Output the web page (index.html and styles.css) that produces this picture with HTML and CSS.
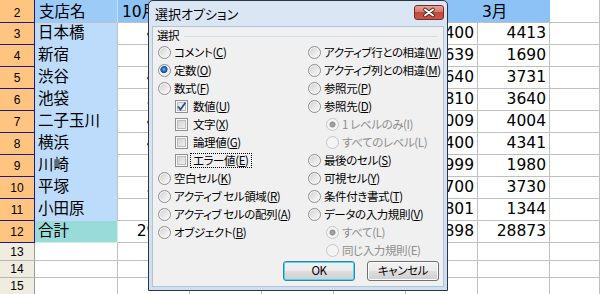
FILE: index.html
```html
<!DOCTYPE html>
<html lang="ja">
<head>
<meta charset="utf-8">
<title>選択オプション</title>
<link rel="stylesheet" href="styles.css">
</head>
<body>
<div class="sheet">
  <div class="row r2">
    <div class="c rh">2</div>
    <div class="c hd hb">支店名</div>
    <div class="c hd">10月</div>
    <div class="c hd">11月</div>
    <div class="c hd">12月</div>
    <div class="c hd">1月</div>
    <div class="c hd">2月</div>
    <div class="c hd">3月</div>
    <div class="c"></div>
  </div>
  <div class="row"><div class="c rh">3</div><div class="c nm">日本橋</div><div class="c n">4120</div><div class="c n"></div><div class="c n"></div><div class="c n"></div><div class="c n">3400</div><div class="c n">4413</div><div class="c"></div></div>
  <div class="row"><div class="c rh">4</div><div class="c nm">新宿</div><div class="c n">1580</div><div class="c n"></div><div class="c n"></div><div class="c n"></div><div class="c n">1639</div><div class="c n">1690</div><div class="c"></div></div>
  <div class="row"><div class="c rh">5</div><div class="c nm">渋谷</div><div class="c n">4210</div><div class="c n"></div><div class="c n"></div><div class="c n"></div><div class="c n">3640</div><div class="c n">3731</div><div class="c"></div></div>
  <div class="row"><div class="c rh">6</div><div class="c nm">池袋</div><div class="c n">3520</div><div class="c n"></div><div class="c n"></div><div class="c n"></div><div class="c n">3810</div><div class="c n">3640</div><div class="c"></div></div>
  <div class="row"><div class="c rh">7</div><div class="c nm">二子玉川</div><div class="c n">4100</div><div class="c n"></div><div class="c n"></div><div class="c n"></div><div class="c n">4009</div><div class="c n">4004</div><div class="c"></div></div>
  <div class="row"><div class="c rh">8</div><div class="c nm">横浜</div><div class="c n">4230</div><div class="c n"></div><div class="c n"></div><div class="c n"></div><div class="c n">3400</div><div class="c n">4341</div><div class="c"></div></div>
  <div class="row"><div class="c rh">9</div><div class="c nm">川崎</div><div class="c n">1870</div><div class="c n"></div><div class="c n"></div><div class="c n"></div><div class="c n">1999</div><div class="c n">1980</div><div class="c"></div></div>
  <div class="row"><div class="c rh">10</div><div class="c nm">平塚</div><div class="c n">3620</div><div class="c n"></div><div class="c n"></div><div class="c n"></div><div class="c n">3700</div><div class="c n">3730</div><div class="c"></div></div>
  <div class="row"><div class="c rh">11</div><div class="c nm">小田原</div><div class="c n">1290</div><div class="c n"></div><div class="c n"></div><div class="c n"></div><div class="c n">1801</div><div class="c n">1344</div><div class="c"></div></div>
  <div class="row"><div class="c rh">12</div><div class="c nm tot">合計</div><div class="c n">29540</div><div class="c n"></div><div class="c n"></div><div class="c n"></div><div class="c n">28898</div><div class="c n">28873</div><div class="c"></div></div>
  <div class="row r13"><div class="c rh off">13</div><div class="c"></div><div class="c"></div><div class="c"></div><div class="c"></div><div class="c"></div><div class="c"></div><div class="c"></div><div class="c"></div></div>
  <div class="row r14"><div class="c rh off">14</div><div class="c"></div><div class="c"></div><div class="c"></div><div class="c"></div><div class="c"></div><div class="c"></div><div class="c"></div><div class="c"></div></div>
  <div class="row r14"><div class="c rh off">15</div><div class="c"></div><div class="c"></div><div class="c"></div><div class="c"></div><div class="c"></div><div class="c"></div><div class="c"></div><div class="c"></div></div>
</div>

<div class="dlg">
  <div class="titlebar">
    <span class="ttl">選択オプション</span>
    <span class="close"><svg width="30" height="15" viewBox="0 0 30 15"><path d="M11 4.5 L19 10.5 M19 4.5 L11 10.5" stroke="#4a2020" stroke-width="3.6" stroke-linecap="round"/><path d="M11 4.5 L19 10.5 M19 4.5 L11 10.5" stroke="#ffffff" stroke-width="2" stroke-linecap="round"/></svg></span>
  </div>
  <div class="client">
    <div class="grp"><span>選択</span><i class="rule"></i></div>
    <div class="cols">
      <div class="col">
        <div class="opt"><span class="rb"></span>コメント(<u>C</u>)</div>
        <div class="opt"><span class="rb on"></span>定数(<u>O</u>)</div>
        <div class="opt"><span class="rb"></span>数式(<u>F</u>)</div>
        <div class="opt ind"><span class="cb on"><svg width="11" height="11" viewBox="0 0 11 11"><path d="M2 5.5 L4.5 8.5 L9.5 1.5" fill="none" stroke="#2a4f8f" stroke-width="1.7"/></svg></span>数値(<u>U</u>)</div>
        <div class="opt ind"><span class="cb"></span>文字(<u>X</u>)</div>
        <div class="opt ind"><span class="cb"></span>論理値(<u>G</u>)</div>
        <div class="opt ind"><span class="cb fc"></span><span class="focus">エラー値(<u>E</u>)</span></div>
        <div class="opt"><span class="rb"></span>空白セル(<u>K</u>)</div>
        <div class="opt"><span class="rb"></span>アクティブ セル領域(<u>R</u>)</div>
        <div class="opt"><span class="rb"></span>アクティブ セルの配列(<u>A</u>)</div>
        <div class="opt"><span class="rb"></span>オブジェクト(<u>B</u>)</div>
      </div>
      <div class="col">
        <div class="opt"><span class="rb"></span>アクティブ行との相違(<u>W</u>)</div>
        <div class="opt"><span class="rb"></span>アクティブ列との相違(<u>M</u>)</div>
        <div class="opt"><span class="rb"></span>参照元(<u>P</u>)</div>
        <div class="opt"><span class="rb"></span>参照先(<u>D</u>)</div>
        <div class="opt sub dis"><span class="rb on"></span>1 レベルのみ(I)</div>
        <div class="opt sub dis"><span class="rb"></span>すべてのレベル(L)</div>
        <div class="opt"><span class="rb"></span>最後のセル(<u>S</u>)</div>
        <div class="opt"><span class="rb"></span>可視セル(<u>Y</u>)</div>
        <div class="opt"><span class="rb"></span>条件付き書式(<u>T</u>)</div>
        <div class="opt"><span class="rb"></span>データの入力規則(<u>V</u>)</div>
        <div class="opt sub dis"><span class="rb on"></span>すべて(L)</div>
        <div class="opt sub dis"><span class="rb"></span>同じ入力規則(E)</div>
      </div>
    </div>
    <div class="btns">
      <span class="btn def">OK</span>
      <span class="btn">キャンセル</span>
    </div>
  </div>
</div>
</body>
</html>
```

FILE: styles.css
```css
html, body {
  margin: 0;
  padding: 0;
}
body {
  width: 600px;
  height: 294px;
  overflow: hidden;
  position: relative;
  background: #fff;
}

/* ---------- spreadsheet ---------- */
.sheet {
  display: flex;
  flex-direction: column;
  font-family: "DejaVu Sans", "Noto Sans CJK JP", sans-serif;
  font-size: 15.5px;
  color: #000;
}
.row {
  display: grid;
  grid-template-columns: 35px 83px 72px 72px 72px 72px 72px 72px 50px;
  height: 22px;
}
.row.r2 { height: 23px; }
.row.r13 { height: 18px; }
.row.r14 { height: 17px; }

.c {
  box-sizing: border-box;
  border-right: 1px solid #c0c0c0;
  border-bottom: 1px solid #c0c0c0;
  display: flex;
  align-items: center;
  line-height: 1;
  white-space: nowrap;
  overflow: hidden;
}
.rh {
  background: #ffc47f;
  border-right-color: #1a1a8c;
  border-bottom-color: #1a1a8c;
  justify-content: center;
  font-family: "Liberation Sans", sans-serif;
  font-size: 12px;
}
.rh.off {
  background: #efece0;
  border-right-color: #9a9a9a;
  border-bottom-color: #b8b8b8;
}
.r2 .c { padding-top: 4px; }
.hd {
  background: #8cc2f6;
  border-right-color: #8cc2f6;
  border-bottom-color: #c0c0c0;
  padding-left: 4px;
}
.hb {
  background: #9ccbf7;
  border-right-color: #c8dff5;
  padding-left: 4px;
}
.nm {
  background: #bddbfa;
  border-bottom-color: #bddbfa;
  padding-left: 3px;
}
.nm.tot {
  background: #98dbd9;
  border-bottom-color: #ccf5cc;
  border-right-color: #ccf5cc;
}
.n {
  justify-content: flex-end;
  padding-right: 3px;
}

/* ---------- dialog ---------- */
.dlg {
  position: absolute;
  left: 148px;
  top: 0;
  width: 300px;
  height: 291px;
  box-sizing: border-box;
  border: 1px solid #2b3546;
  border-radius: 5px 5px 0 0;
  background: linear-gradient(#dae6f3, #cfdff0);
  padding: 0 3px 3px 3px;
  display: flex;
  flex-direction: column;
  font-family: "Noto Sans CJK JP", sans-serif;
  font-feature-settings: "palt";
  font-size: 11.5px;
  letter-spacing: -0.4px;
  color: #000;
}
.titlebar {
  height: 25px;
  display: flex;
  align-items: flex-start;
  justify-content: space-between;
}
.ttl {
  font-size: 13px;
  letter-spacing: 0;
  line-height: 25px;
  padding-left: 3px;
}
.close {
  margin-top: 4px;
  width: 30px;
  height: 15px;
  box-sizing: border-box;
  border: 1px solid #7a2a22;
  border-radius: 3px;
  background: linear-gradient(#e3a496 0%, #d4786a 45%, #c2473b 50%, #c9574a 100%);
  display: flex;
}
.close svg { display: block; margin: -1px; }

.client {
  flex: 1;
  background: #f0f0f0;
  border: 1px solid #b3c3d6;
  display: flex;
  flex-direction: column;
}
.grp {
  height: 16px;
  display: flex;
  align-items: center;
  padding: 0 5px 0 4px;
}
.grp span { line-height: 16px; }
.rule {
  flex: 1;
  height: 1px;
  margin-left: 5px;
  margin-top: 2px;
  background: #d3dee8;
}
.cols {
  display: grid;
  grid-template-columns: 150px 1fr;
  padding-left: 5px;
}
.col {
  display: flex;
  flex-direction: column;
}
.opt {
  height: 18px;
  display: flex;
  align-items: center;
  white-space: nowrap;
}
.opt u { text-decoration: underline; text-underline-offset: 1px; }
.opt.ind { padding-left: 17px; }
.opt.sub { padding-left: 18px; }
.opt.dis { color: #8e8e8e; }

.rb {
  width: 13px;
  height: 13px;
  box-sizing: border-box;
  border-radius: 50%;
  border: 1px solid #8f8f8f;
  background: linear-gradient(135deg, #cdcdcd 0%, #e9e9e9 55%, #fbfbfb 100%);
  box-shadow: inset 0 0 0 1px #f6f6f6;
  margin-right: 3px;
  flex: none;
}
.rb.on {
  background:
    radial-gradient(circle at 45% 40%, #6cc0f2 0, #2a7fd4 1.6px, #1a4f9a 3px, #264a7a 3.4px, transparent 3.8px),
    linear-gradient(135deg, #cdcdcd 0%, #e9e9e9 55%, #fbfbfb 100%);
}
.dis .rb {
  border-color: #c6c6c6;
  background: #f4f4f4;
  box-shadow: none;
}
.dis .rb.on {
  background:
    radial-gradient(circle, #a9a9a9 0, #8f8f8f 2.6px, transparent 3.4px),
    #f4f4f4;
}
.cb {
  width: 13px;
  height: 13px;
  box-sizing: border-box;
  border: 1px solid #8f8f8f;
  background: linear-gradient(135deg, #cbcbcb 0%, #e6e6e6 60%, #f6f6f6 100%);
  box-shadow: inset 0 0 0 1px #f7f7f7, inset 0 0 0 2px #bdbdbd;
  margin-right: 5px;
  flex: none;
  display: flex;
}
.cb.on {
  background: linear-gradient(135deg, #dcdcdc 0%, #eeeeee 60%, #fafafa 100%);
}
.cb svg { display: block; }
.cb.fc { margin-right: 2px; }
.focus {
  border: 1px dotted #000;
  padding: 0 2px;
  line-height: 13px;
}

.btns {
  display: flex;
  justify-content: flex-end;
  gap: 12px;
  padding-right: 4px;
  margin-top: 2px;
}
.btn {
  width: 72px;
  height: 20px;
  box-sizing: border-box;
  border: 1px solid #707070;
  border-radius: 3px;
  background: linear-gradient(#f2f2f2 0%, #ebebeb 48%, #dddddd 52%, #cfcfcf 100%);
  box-shadow: inset 0 0 0 1px #fcfcfc;
  display: flex;
  align-items: center;
  justify-content: center;
  line-height: 1;
}
.btn.def {
  border-color: #3c7fb1;
  box-shadow: inset 0 0 0 1px #48d8fb;
}
```
